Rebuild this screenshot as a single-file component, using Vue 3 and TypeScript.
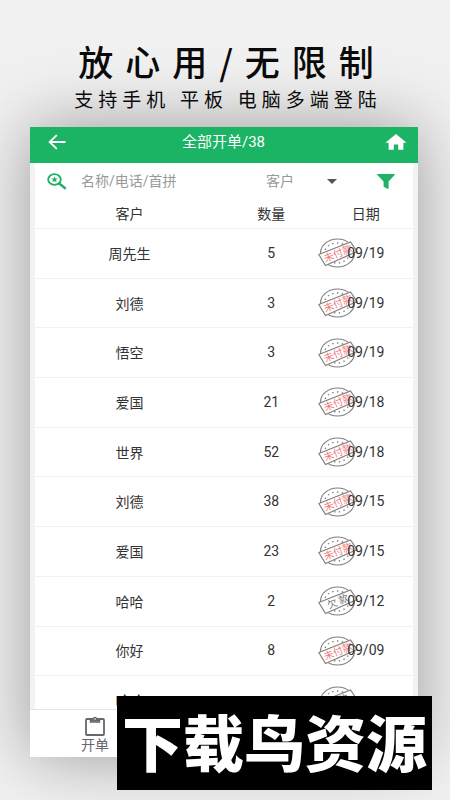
<script setup lang="ts">
import { ref } from 'vue'

interface Order {
  name: string
  count: string
  date: string
  status: 'unpaid' | 'debt'
}

const query = ref('')
const orders: Order[] = [
  { name: '周先生', count: '5', date: '09/19', status: 'unpaid' },
  { name: '刘德', count: '3', date: '09/19', status: 'unpaid' },
  { name: '悟空', count: '3', date: '09/19', status: 'unpaid' },
  { name: '爱国', count: '21', date: '09/18', status: 'unpaid' },
  { name: '世界', count: '52', date: '09/18', status: 'unpaid' },
  { name: '刘德', count: '38', date: '09/15', status: 'unpaid' },
  { name: '爱国', count: '23', date: '09/15', status: 'unpaid' },
  { name: '哈哈', count: '2', date: '09/12', status: 'debt' },
  { name: '你好', count: '8', date: '09/09', status: 'unpaid' },
  { name: '哈哈', count: '', date: '', status: 'debt' },
]
</script>

<template>
  <main class="poster">
    <header class="slogan">
      <h1>放心用/无限制</h1>
      <p>支持手机 平板 电脑多端登陆</p>
    </header>

    <section class="phone">
      <div class="topbar">
        <button class="icon-btn" type="button" aria-label="返回">
          <svg width="18" height="16" viewBox="0 0 18 16" fill="none" stroke="#fff" stroke-width="1.8">
            <path d="M17.5 8H1.8M8.8 1.2L1.6 8l7.2 6.8" />
          </svg>
        </button>
        <h2>全部开单/38</h2>
        <button class="icon-btn" type="button" aria-label="首页">
          <svg width="22" height="16" viewBox="0 0 22 16" fill="#fff">
            <path d="M11 0L.4 8.800h3.200V15.800h5.200V10.500h4.400v5.300h5.200V8.800h3.200z" />
          </svg>
        </button>
      </div>

      <div class="body">
        <form class="filters" @submit.prevent>
          <label class="search">
            <svg width="20" height="17" viewBox="0 0 20 17" fill="none" stroke="#1fb267">
              <ellipse cx="7.500" cy="6.500" rx="6.300" ry="5.400" stroke-width="1.900" />
              <path d="M11.600 10L18.800 15.800" stroke-width="2.500" />
              <path d="M7.500 3.300l.9 2.100 2.300.2-1.700 1.500.5 2.200-2-1.200-2 1.200.5-2.200-1.700-1.500 2.300-.2z" fill="#1fb267" stroke="none" />
            </svg>
            <input v-model="query" type="text" placeholder="名称/电话/首拼" aria-label="搜索" />
          </label>
          <label class="kind">
            <select aria-label="类型">
              <option>客户</option>
            </select>
            <svg width="10" height="5" viewBox="0 0 10 5" fill="#555"><path d="M0 0h10L5 5z" /></svg>
          </label>
          <button class="icon-btn" type="button" aria-label="筛选">
            <svg width="18" height="15" viewBox="0 0 18 15" fill="#1fb267">
              <path d="M.8 0h16.4q1 .2.4 1L11.600 7.600V14.400q-.2.800-1 .4L6.600 12.800V7.600L.4 1Q-.2.200.8 0z" />
            </svg>
          </button>
        </form>

        <div class="list">
          <table>
            <thead>
              <tr><th>客户</th><th>数量</th><th>日期</th></tr>
            </thead>
            <tbody>
              <tr v-for="(o, i) in orders" :key="i">
                <td>{{ o.name }}</td>
                <td>{{ o.count }}</td>
                <td class="date">
                  <svg class="stamp" width="42" height="32" viewBox="0 0 42 32" fill="none" stroke="#808080">
                    <ellipse cx="19.500" cy="16" rx="17" ry="14" stroke-width="1.200" />
                    <ellipse cx="19" cy="16" rx="12.500" ry="10" stroke-width="1.400" stroke-dasharray="1.400 3.400" />
                    <path d="M.8 17.500L32.500 5l6.500 9.500L7.500 28.500z" fill="#fff" stroke-width="1.200" />
                    <text
                      x="20" y="20" text-anchor="middle" stroke="none"
                      transform="rotate(-22 20 16.500)" :class="o.status"
                    >{{ o.status === 'unpaid' ? '未付款' : '欠 款' }}</text>
                  </svg>
                  <span>{{ o.date }}</span>
                </td>
              </tr>
            </tbody>
          </table>
        </div>
      </div>

      <nav class="tabs">
        <a href="#order">
          <svg width="20" height="20" viewBox="0 0 20 20" fill="none" stroke="#666670">
            <rect x="1" y="3" width="18" height="16" rx="1" stroke-width="1.800" />
            <path d="M5.500 3v3h9V3" stroke-width="1.400" />
            <path d="M6 3h1.800a2.200 2.200 0 0 1 4.400 0H14V5.500H6z" fill="#666670" stroke="none" />
            <circle cx="10" cy="3" r=".8" fill="#fff" stroke="none" />
          </svg>
          <span>开单</span>
        </a>
      </nav>
    </section>

    <div class="watermark">下载鸟资源</div>
  </main>
</template>

<style>
body {
  margin: 0;
}
</style>

<style scoped>
.poster {
  position: relative;
  display: flex;
  flex-direction: column;
  box-sizing: border-box;
  min-height: 100vh;
  padding: 40px 32px 43px 30px;
  overflow: hidden;
  background: #f1f1f1;
  color: #333;
  font-family: Roboto, "Noto Sans CJK SC", sans-serif;
  font-size: 14px;
}
.slogan {
  position: relative;
  z-index: 1;
  height: 87px;
  text-align: center;
  color: #0a0a0a;
  white-space: nowrap;
}
h1 {
  margin: 0;
  padding-left: 16px;
  font-family: "Noto Sans CJK SC", sans-serif;
  font-size: 35px;
  font-weight: 500;
  line-height: 42px;
  letter-spacing: 12px;
}
.slogan p {
  margin: 0;
  padding-left: 8px;
  font-size: 19px;
  line-height: 38px;
  letter-spacing: 5px;
}
.phone {
  display: flex;
  flex: 1;
  flex-direction: column;
  background: #f3f3f3;
  box-shadow: 0 0 64px rgba(0, 0, 0, 0.36);
}
.topbar {
  display: flex;
  align-items: center;
  justify-content: space-between;
  box-sizing: border-box;
  height: 36px;
  padding: 0 11px 6px 18px;
  background: #1bb364;
  color: #fff;
}
h2 {
  margin: 0;
  padding-right: 4px;
  font-size: 15px;
  font-weight: 400;
  line-height: 28px;
}
.icon-btn {
  display: flex;
  padding: 0;
  border: 0;
  background: none;
}
.body {
  flex: 1;
  margin: 0 5px;
  background: #fff;
}
.filters {
  display: flex;
  align-items: center;
  height: 36px;
  padding: 0 18px 0 12px;
}
.search {
  display: flex;
  flex: 1;
  align-items: center;
  gap: 14px;
}
input,
select {
  min-width: 0;
  padding: 0;
  border: 0;
  outline: 0;
  background: none;
  color: #999;
  font: inherit;
}
input {
  width: 130px;
}
input::placeholder {
  color: #999;
}
.kind {
  display: flex;
  align-items: center;
  width: 71px;
  margin-right: 40px;
}
select {
  flex: 1;
  appearance: none;
}
.list {
  height: 510px;
  overflow: hidden;
}
table {
  width: 100%;
  height: 527px;
  table-layout: fixed;
  border-collapse: collapse;
}
th,
td {
  padding: 0 0 1px;
  border-bottom: 1px solid #f1f1f1;
  font-weight: 400;
  text-align: center;
}
th {
  height: 28px;
}
th:nth-child(1) {
  width: 50%;
}
th:nth-child(2) {
  width: 25%;
}
.date {
  position: relative;
}
.date span {
  position: relative;
}
.stamp {
  position: absolute;
  top: 50%;
  left: -1px;
  margin-top: -16px;
}
.stamp text {
  font-family: "Noto Sans CJK SC", sans-serif;
  font-size: 10px;
}
.unpaid {
  fill: #f27a7e;
}
.debt {
  fill: #777;
}
.tabs {
  display: flex;
  height: 47px;
  border-top: 1px solid #e4e4e4;
  background: #fff;
}
.tabs a {
  display: flex;
  flex-direction: column;
  align-items: center;
  width: 130px;
  padding-top: 6px;
  color: #666670;
  line-height: 18px;
  text-decoration: none;
}
.watermark {
  position: absolute;
  right: 18px;
  bottom: 10px;
  width: 315px;
  height: 94px;
  background: #000;
  color: #fff;
  font-family: "Noto Sans CJK SC", sans-serif;
  font-size: 61px;
  font-style: oblique 6deg;
  font-weight: 900;
  line-height: 90px;
  text-align: center;
  white-space: nowrap;
}
</style>
